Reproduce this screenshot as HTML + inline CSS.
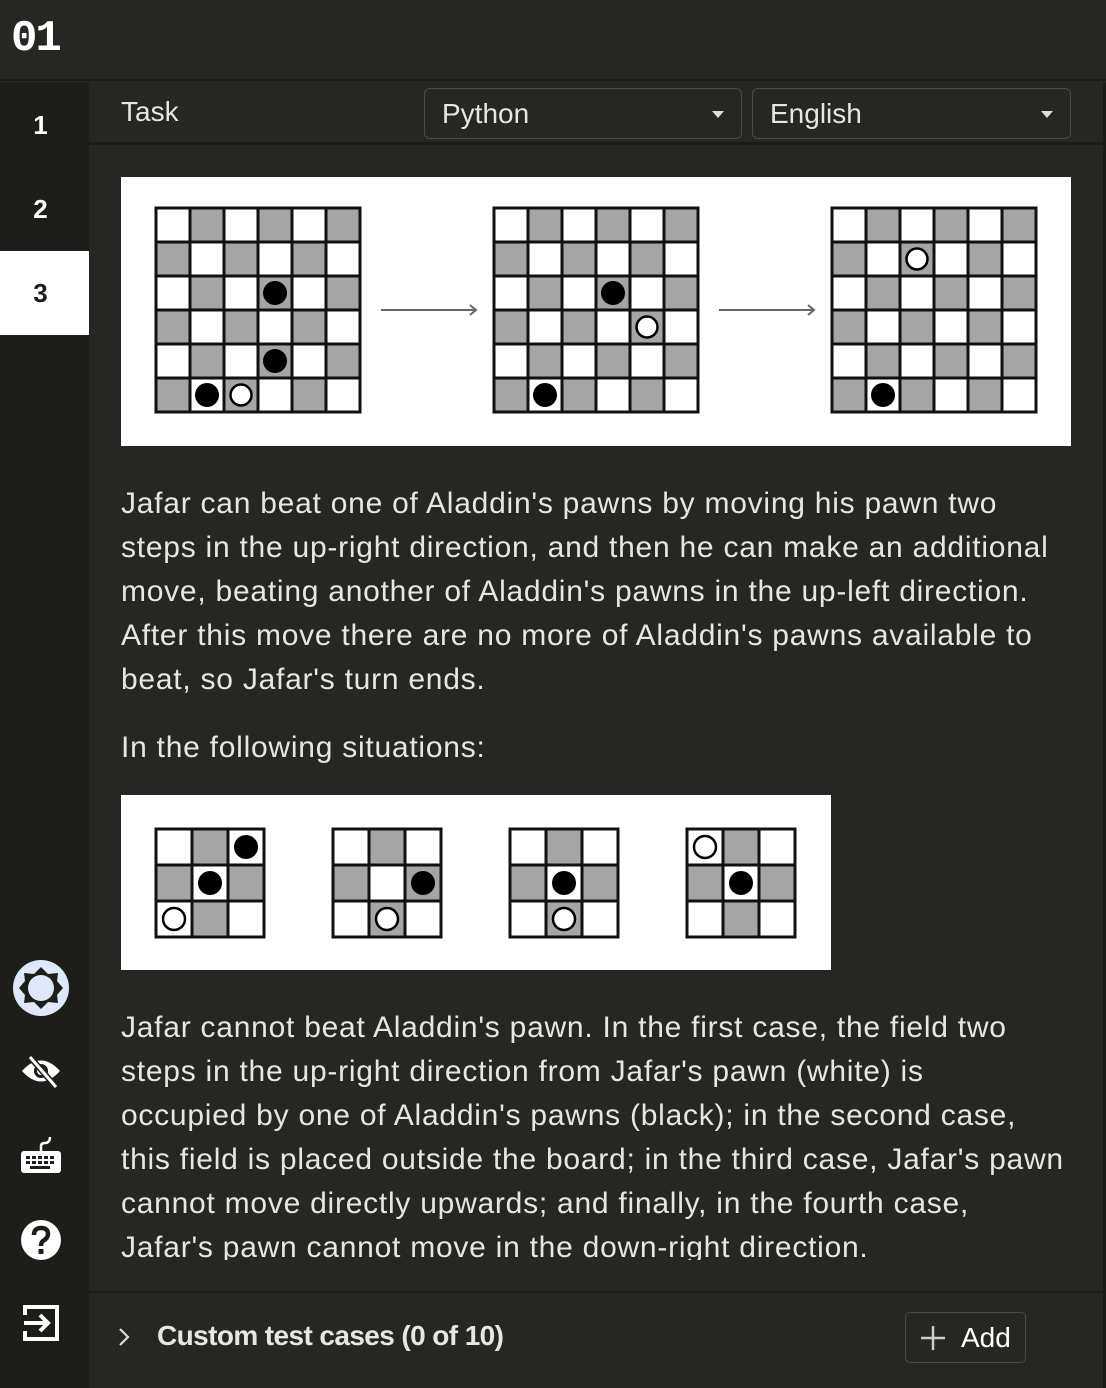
<!DOCTYPE html>
<html><head><meta charset="utf-8"><style>
*{margin:0;padding:0;box-sizing:border-box}
html,body{width:1106px;height:1388px;overflow:hidden;background:#262622;font-family:"Liberation Sans",sans-serif;color:#e6e6e4}
.hdr{position:absolute;left:0;top:0;width:1106px;height:81px;background:#262622;border-bottom:2px solid #1b1b18}
.logo{position:absolute;left:11px;top:14px;font-family:"Liberation Mono",monospace;font-weight:bold;font-size:44px;color:#fff;letter-spacing:-2px}
.side{position:absolute;left:0;top:83px;width:89px;height:1305px;background:#1d1d1a}
.num{position:absolute;left:-4px;width:89px;height:84px;text-align:center;line-height:84px;font-weight:bold;font-size:26px;color:#fff}
.num.sel{background:#fff;color:#1d1d1a;left:0;padding-right:8px}
.tb{position:absolute;left:89px;top:83px;width:1014px;height:62px;border-bottom:3px solid #1b1b18}
.task{position:absolute;left:32px;top:13px;font-size:28px}
.dd{position:absolute;top:5px;height:51px;border:1.5px solid #4a4a46;border-radius:6px;font-size:28px;padding:9px 17px}
.dd:after{content:"";position:absolute;right:17px;top:22px;border:6px solid transparent;border-top:7px solid #ddd;border-bottom:0}
.rb{position:absolute;left:1103px;top:83px;width:3px;height:1305px;background:#1b1b18}
.img{position:absolute;background:#fff}
.p{position:absolute;left:121px;font-size:30px;line-height:44px;white-space:nowrap;letter-spacing:0.75px}
.bot{position:absolute;left:89px;top:1291px;width:1014px;height:97px;background:#262622;border-top:2px solid #1b1b18}
.add{position:absolute;left:816px;top:19px;width:121px;height:51px;border:1.5px solid #4a4a46;border-radius:5px;font-size:28px;padding:9px 0 0 55px;color:#fff}
</style></head><body>
<svg width="0" height="0" style="position:absolute"><defs>
<pattern id="ck" width="68" height="68" patternUnits="userSpaceOnUse"><rect width="68" height="68" fill="#fff"/><rect x="34" width="34" height="34" fill="#a5a5a5"/><rect y="34" width="34" height="34" fill="#a5a5a5"/></pattern>
<pattern id="gr" width="34" height="34" patternUnits="userSpaceOnUse"><rect width="34" height="34" fill="none" stroke="#111" stroke-width="3"/></pattern>
<pattern id="ck3" width="72" height="72" patternUnits="userSpaceOnUse"><rect width="72" height="72" fill="#fff"/><rect x="36" width="36" height="36" fill="#a5a5a5"/><rect y="36" width="36" height="36" fill="#a5a5a5"/></pattern>
<pattern id="gr3" width="36" height="36" patternUnits="userSpaceOnUse"><rect width="36" height="36" fill="none" stroke="#111" stroke-width="3"/></pattern>
</defs></svg>
<div class="hdr"><div class="logo">01</div></div>
<div class="side">
<div class="num" style="top:0">1</div>
<div class="num" style="top:84px">2</div>
<div class="num sel" style="top:168px">3</div>
<svg style="position:absolute;left:12px;top:876px" width="58" height="58" viewBox="0 0 58 58"><circle cx="29" cy="29" r="28" fill="#dde9f8"/><polygon points="29,8 36,15 46,14 45,22 51,29 45,36 46,44 36,43 29,50 22,43 12,44 13,36 7,29 13,22 12,14 22,15" fill="#1d1d1a"/><circle cx="29" cy="29" r="13" fill="#dde9f8"/></svg>
<svg style="position:absolute;left:20px;top:971px" width="42" height="36" viewBox="0 0 42 36"><path d="M2 17 Q21 -4 40 17 Q21 38 2 17Z" fill="#fff"/><circle cx="21" cy="17" r="7" fill="#1d1d1a"/><circle cx="21" cy="17" r="4" fill="#fff"/><line x1="10" y1="3" x2="36" y2="33" stroke="#1d1d1a" stroke-width="6"/><line x1="10" y1="3" x2="36" y2="33" stroke="#fff" stroke-width="3"/></svg>
<svg style="position:absolute;left:20px;top:1053px" width="42" height="40" viewBox="0 0 42 40"><path d="M21 15 V10 Q21 7 25 7 Q30 7 30 1" fill="none" stroke="#fff" stroke-width="2.5"/><rect x="1" y="15" width="40" height="22" rx="3" fill="#fff"/><g fill="#1d1d1a"><rect x="6" y="20" width="4" height="3"/><rect x="12" y="20" width="4" height="3"/><rect x="18" y="20" width="4" height="3"/><rect x="24" y="20" width="4" height="3"/><rect x="30" y="20" width="4" height="3"/><rect x="6" y="25" width="4" height="3"/><rect x="12" y="25" width="4" height="3"/><rect x="18" y="25" width="4" height="3"/><rect x="24" y="25" width="4" height="3"/><rect x="30" y="25" width="4" height="3"/><rect x="10" y="30" width="20" height="3"/></g></svg>
<svg style="position:absolute;left:20px;top:1136px" width="42" height="42" viewBox="0 0 42 42"><circle cx="21" cy="21" r="20" fill="#fff"/><path d="M14 16 Q14 9 21 9 Q28 9 28 15 Q28 19 23 22 Q21 23.5 21 27" fill="none" stroke="#1d1d1a" stroke-width="4.5"/><rect x="18.5" y="30" width="5" height="5" fill="#1d1d1a"/></svg>
<svg style="position:absolute;left:21px;top:1220px" width="40" height="40" viewBox="0 0 40 40"><path d="M4 12 V4 H36 V36 H4 V28" fill="none" stroke="#fff" stroke-width="4"/><path d="M3 20 H27 M19 12 L27 20 L19 28" fill="none" stroke="#fff" stroke-width="4"/></svg>
</div>
<div class="tb"><div class="task">Task</div>
<div class="dd" style="left:335px;width:318px">Python</div>
<div class="dd" style="left:663px;width:319px">English</div></div>
<div class="rb"></div>

<div class="img" style="left:121px;top:177px;width:950px;height:269px">
<svg width="950" height="269">
<g transform="translate(35,31)"><rect width="204" height="204" fill="url(#ck)"/><rect width="204" height="204" fill="url(#gr)"/><rect width="204" height="204" fill="none" stroke="#111" stroke-width="3"/>
<circle cx="119" cy="85" r="12" fill="#000"/><circle cx="119" cy="153" r="12" fill="#000"/><circle cx="51" cy="187" r="12" fill="#000"/><circle cx="85" cy="187" r="10.5" fill="#fff" stroke="#000" stroke-width="2.5"/></g>
<path d="M260 133 H355 M349 128 L355 133 L349 138" stroke="#666" stroke-width="2" fill="none"/>
<g transform="translate(373,31)"><rect width="204" height="204" fill="url(#ck)"/><rect width="204" height="204" fill="url(#gr)"/><rect width="204" height="204" fill="none" stroke="#111" stroke-width="3"/>
<circle cx="119" cy="85" r="12" fill="#000"/><circle cx="51" cy="187" r="12" fill="#000"/><circle cx="153" cy="119" r="10.5" fill="#fff" stroke="#000" stroke-width="2.5"/></g>
<path d="M598 133 H693 M687 128 L693 133 L687 138" stroke="#666" stroke-width="2" fill="none"/>
<g transform="translate(711,31)"><rect width="204" height="204" fill="url(#ck)"/><rect width="204" height="204" fill="url(#gr)"/><rect width="204" height="204" fill="none" stroke="#111" stroke-width="3"/>
<circle cx="51" cy="187" r="12" fill="#000"/><circle cx="85" cy="51" r="10.5" fill="#fff" stroke="#000" stroke-width="2.5"/></g>
</svg></div>

<div class="p" style="top:482px">Jafar can beat one of Aladdin's pawns by moving his pawn two<br>steps in the up-right direction, and then he can make an additional<br>move, beating another of Aladdin's pawns in the up-left direction.<br>After this move there are no more of Aladdin's pawns available to<br>beat, so Jafar's turn ends.</div>
<div class="p" style="top:726px">In the following situations:</div>

<div class="img" style="left:121px;top:795px;width:710px;height:175px">
<svg width="710" height="175">
<g transform="translate(35,34)"><rect width="108" height="108" fill="url(#ck3)"/><rect width="108" height="108" fill="url(#gr3)"/><rect width="108" height="108" fill="none" stroke="#111" stroke-width="3"/>
<circle cx="90" cy="18" r="12" fill="#000"/><circle cx="54" cy="54" r="12" fill="#000"/><circle cx="18" cy="90" r="11" fill="#fff" stroke="#000" stroke-width="2.5"/></g>
<g transform="translate(212,34)"><rect width="108" height="108" fill="url(#ck3)"/><rect x="36" y="36" width="36" height="36" fill="#fff"/><rect x="72" y="36" width="36" height="36" fill="#a5a5a5"/><rect x="36" y="72" width="36" height="36" fill="#a5a5a5"/><rect width="108" height="108" fill="url(#gr3)"/><rect width="108" height="108" fill="none" stroke="#111" stroke-width="3"/>
<circle cx="90" cy="54" r="12" fill="#000"/><circle cx="54" cy="90" r="11" fill="#fff" stroke="#000" stroke-width="2.5"/></g>
<g transform="translate(389,34)"><rect width="108" height="108" fill="url(#ck3)"/><rect x="36" y="72" width="36" height="36" fill="#a5a5a5"/><rect width="108" height="108" fill="url(#gr3)"/><rect width="108" height="108" fill="none" stroke="#111" stroke-width="3"/>
<circle cx="54" cy="54" r="12" fill="#000"/><circle cx="54" cy="90" r="11" fill="#fff" stroke="#000" stroke-width="2.5"/></g>
<g transform="translate(566,34)"><rect width="108" height="108" fill="url(#ck3)"/><rect x="36" y="72" width="36" height="36" fill="#a5a5a5"/><rect width="108" height="108" fill="url(#gr3)"/><rect width="108" height="108" fill="none" stroke="#111" stroke-width="3"/>
<circle cx="54" cy="54" r="12" fill="#000"/><circle cx="18" cy="18" r="11" fill="#fff" stroke="#000" stroke-width="2.5"/></g>
</svg></div>

<div class="p" style="top:1006px">Jafar cannot beat Aladdin's pawn. In the first case, the field two<br>steps in the up-right direction from Jafar's pawn (white) is<br>occupied by one of Aladdin's pawns (black); in the second case,<br>this field is placed outside the board; in the third case, Jafar's pawn<br>cannot move directly upwards; and finally, in the fourth case,<br>Jafar's pawn cannot move in the down-right direction.</div>
<div style="position:absolute;left:89px;top:1260px;width:1014px;height:31px;background:#262622"></div>

<div class="bot">
<svg style="position:absolute;left:28px;top:34px" width="14" height="20"><path d="M3 2 L11 10 L3 18" fill="none" stroke="#ddd" stroke-width="2.2"/></svg>
<div style="position:absolute;left:68px;top:27px;font-size:28px;font-weight:bold;letter-spacing:-0.6px;color:#e6e6e4">Custom test cases (0 of 10)</div>
<div class="add"><svg style="position:absolute;left:14px;top:12px" width="26" height="26"><path d="M13 1 V25 M1 13 H25" stroke="#ccc" stroke-width="2.5"/></svg>Add</div>
</div>
</body></html>
